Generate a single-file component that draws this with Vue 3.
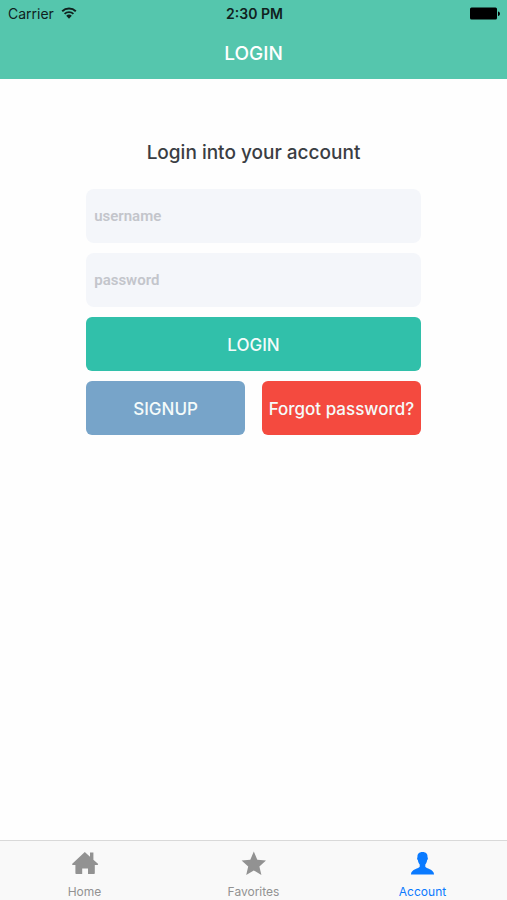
<script setup>
import { ref, reactive } from 'vue'

const form = reactive({
  username: '',
  password: ''
})

const activeTab = ref('account')
const tabs = [
  { id: 'home', label: 'Home' },
  { id: 'favorites', label: 'Favorites' },
  { id: 'account', label: 'Account' },
]

function login() {
  if (!form.username.trim() || !form.password) return
  form.password = ''
}
</script>

<template>
  <div class="screen">
    <header class="header">
      <!-- Status bar -->
      <div class="status-bar">
        <div class="carrier">
          <span>Carrier</span>
          <svg class="wifi" viewBox="0 0 16 12" aria-hidden="true">
            <path d="M1.2 4.3a9.8 9.8 0 0 1 13.6 0" />
            <path d="M3.6 6.9a6.4 6.4 0 0 1 8.8 0" />
            <path class="dot" d="M5.2 8.8a4 4 0 0 1 5.6 0L8 11.8z" />
          </svg>
        </div>
        <span class="time">2:30 PM</span>
        <svg class="battery" viewBox="0 0 31 13" aria-hidden="true">
          <rect x="0" y="0.500" width="27" height="12" rx="1.5" />
          <path d="M28 4.500c2.600 0 2.600 4.400 0 4.400z" />
        </svg>
      </div>
      <h1 class="title">LOGIN</h1>
    </header>

    <main class="main">
      <h2 class="heading">Login into your account</h2>

      <form class="login-form" @submit.prevent="login">
        <input v-model="form.username" class="field" type="text" placeholder="username" aria-label="username" />
        <input v-model="form.password" class="field" type="password" placeholder="password" aria-label="password" />
        <button type="submit" class="btn btn-login">LOGIN</button>
        <div class="form-row">
          <button type="button" class="btn btn-signup">SIGNUP</button>
          <button type="button" class="btn btn-forgot">Forgot password?</button>
        </div>
      </form>
    </main>

    <!-- Tab bar -->
    <nav class="tab-bar">
      <button
        v-for="tab in tabs"
        :key="tab.id"
        type="button"
        class="tab"
        :class="{ active: activeTab === tab.id }"
        @click="activeTab = tab.id"
      >
        <svg v-if="tab.id === 'home'" class="tab-icon" viewBox="0 0 28 26" aria-hidden="true">
          <path d="M13.8 2L19 6.7V2.6h3.4v7.2l4.8 4.2-.5 1h-2.9v8.2q0 .8-.8.8h-6v-5.6h-5.8V24h-6q-.8 0-.8-.8V15H1.500l-.5-1z" />
        </svg>
        <svg v-else-if="tab.id === 'favorites'" class="tab-icon" viewBox="0 0 28 26" aria-hidden="true">
          <path d="M13.800 1.600l3.500 8.200 8.700.8-6.600 5.800 2 8.600-7.600-4.500-7.600 4.500 2-8.600-6.600-5.800 8.700-.8z" />
        </svg>
        <svg v-else class="tab-icon" viewBox="0 0 28 26" aria-hidden="true">
          <path d="M13.500 2c3.700 0 5.300 2.100 5 5.300.6.3.6 2-.4 3-.3 2.200-1 3.200-1.800 4.200v2.300c.6 1.700 8.500 2.300 8.800 7.600H1.900c.3-5.300 8.200-5.900 8.800-7.600v-2.300c-.8-1-1.500-2-1.800-4.200-1-1-1-2.700-.4-3-.3-3.200 1.300-5.300 5-5.300z" />
        </svg>
        <span>{{ tab.label }}</span>
      </button>
    </nav>
  </div>
</template>

<style>
body {
  margin: 0;
}
</style>

<style scoped>
* {
  box-sizing: border-box;
  margin: 0;
}

.screen {
  display: flex;
  flex-direction: column;
  min-height: 100vh;
  font-family: Inter, 'Liberation Sans', sans-serif;
  background: #fefefe;
}

/* HEADER */
.header {
  padding-bottom: 12px;
  background: #55c6ad;
}

.status-bar {
  display: grid;
  grid-template-columns: 1fr auto 1fr;
  align-items: center;
  height: 27px;
  padding: 0 6px 0 8px;
  font-size: 14px;
  color: #10211e;
}

.carrier {
  display: flex;
  align-items: center;
  gap: 7px;
}

.wifi {
  width: 16px;
  height: 12px;
  margin-bottom: 2px;
  fill: none;
  stroke: #10211e;
  stroke-width: 1.9;
}

.wifi .dot {
  fill: #10211e;
  stroke: none;
}

.time {
  font-weight: 600;
}

.battery {
  justify-self: end;
  width: 31px;
  height: 13px;
  fill: #000;
}

.title {
  height: 40px;
  line-height: 54px;
  text-align: center;
  font-size: 19px;
  font-weight: 500;
  color: #fff;
}

/* FORM */
.main {
  flex: 1;
  display: flex;
  flex-direction: column;
  align-items: center;
  padding-top: 61px;
}

.heading {
  line-height: 26px;
  margin-bottom: 23px;
  font-size: 19px;
  font-weight: 500;
  color: #3a3d43;
}

.login-form {
  display: flex;
  flex-direction: column;
  gap: 10px;
  width: 66%;
}

.field {
  width: 100%;
  height: 54px;
  padding: 0 8px;
  border: none;
  border-radius: 8px;
  outline: none;
  background: #f4f6fa;
  font-family: 'Liberation Sans Narrow', Roboto, sans-serif;
  font-size: 15px;
  font-weight: 600;
  color: #3a3d43;
}

.field::placeholder {
  color: #c3c5cb;
  opacity: 1;
}

.form-row {
  display: grid;
  grid-template-columns: 1fr 1fr;
  gap: 17px;
}

.btn {
  height: 54px;
  padding: 2px 0 0;
  border: none;
  border-radius: 6px;
  font-family: inherit;
  font-size: 17px;
  font-weight: 500;
  white-space: nowrap;
  color: #f4fbfa;
  cursor: pointer;
}

.btn-login {
  background: #31c0aa;
}

.btn-signup {
  background: #77a4c9;
}

.btn-forgot {
  background: #f44a3f;
}

/* TAB BAR */
.tab-bar {
  display: grid;
  grid-template-columns: repeat(3, 1fr);
  height: 60px;
  border-top: 1px solid #d9d9d9;
  background: #f9f9f9;
}

.tab {
  display: flex;
  flex-direction: column;
  align-items: center;
  justify-content: flex-start;
  gap: 8px;
  padding: 9px 0 0;
  border: none;
  background: none;
  font-family: inherit;
  font-size: 12px;
  line-height: 16px;
  color: #929292;
  cursor: pointer;
}

.tab.active {
  color: #0a7aff;
}

.tab-icon {
  width: 28px;
  height: 26px;
  fill: currentColor;
}
</style>
